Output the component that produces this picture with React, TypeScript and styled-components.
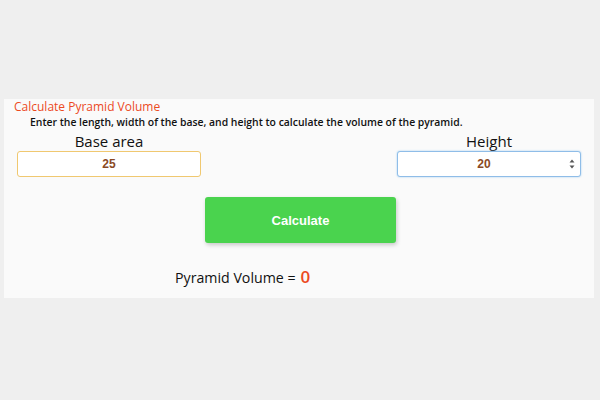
import React, { useState } from "react"
import styled, { createGlobalStyle } from "styled-components"

const GlobalStyle = createGlobalStyle`
  html, body {
    margin: 0;
    padding: 0;
    background: #efefef;
  }
  body {
    height: 400px;
    overflow: hidden;
    font-family: "Comic Sans MS", "Open Sans", sans-serif;
  }
`

const Page = styled.div`
  padding: 99px 6px 0 4px;
`

const Card = styled.section`
  background: #fafafa;
  height: 199px;
  box-sizing: border-box;
  padding: 1px 13px 0 13px;
  display: flex;
  flex-direction: column;
`

const Title = styled.h3`
  margin: 0 0 0 -3px;
  font-size: 12px;
  line-height: 14px;
  font-weight: 400;
  color: #ec4a1f;
`

const Description = styled.p`
  margin: 1px 0 0 13px;
  font-size: 10.4px;
  line-height: 14px;
  font-weight: 600;
  color: #111;
`

const FieldsRow = styled.div`
  display: flex;
  justify-content: space-between;
  margin-top: 3px;
`

const Field = styled.label`
  display: flex;
  flex-direction: column;
  align-items: center;
  width: 184px;
`

const FieldLabel = styled.span`
  font-size: 15px;
  line-height: 18px;
  color: #111;
  margin-bottom: 1px;
`

const InputBox = styled.div`
  position: relative;
  width: 100%;
`

const NumberInput = styled.input<{ $focused?: boolean }>`
  width: 100%;
  height: 26px;
  box-sizing: border-box;
  border: 1px solid ${({ $focused }) => ($focused ? "#8fbde8" : "#f0c870")};
  box-shadow: ${({ $focused }) => ($focused ? "0 0 2px #9ccaf0" : "none")};
  border-radius: 3px;
  background: #fff;
  text-align: center;
  font-family: "Liberation Sans", Arial, sans-serif;
  font-weight: 700;
  font-size: 12px;
  color: #8a4a24;
  caret-color: #8a4a24;
  outline: none;
  padding: 0 ${({ $focused }) => ($focused ? "14px" : "4px")} 0 4px;
  -moz-appearance: textfield;

  &::-webkit-inner-spin-button,
  &::-webkit-outer-spin-button {
    -webkit-appearance: none;
    margin: 0;
  }
`

const Spinner = styled.svg`
  position: absolute;
  right: 6px;
  top: 8px;
  width: 6px;
  height: 10px;
  pointer-events: none;
`

const ButtonRow = styled.div`
  display: flex;
  justify-content: center;
  margin-top: 20px;
`

const CalcButton = styled.button`
  width: 191px;
  height: 46px;
  margin-left: 3px;
  border: none;
  border-radius: 3px;
  background: #4ad34e;
  color: #fff;
  font-family: "Liberation Sans", Arial, sans-serif;
  font-weight: 700;
  font-size: 13px;
  box-shadow: 1px 2px 4px rgba(0, 0, 0, 0.2);
  cursor: pointer;
`

const Result = styled.div`
  margin: 24px 0 0 158px;
  font-size: 14.2px;
  line-height: 20px;
  color: #111;
  display: flex;
  align-items: baseline;
  gap: 5px;
`

const ResultValue = styled.span`
  font-size: 17px;
  font-weight: 600;
  color: #ec4a1f;
`

export default function App() {
  const [base, setBase] = useState("25")
  const [height, setHeight] = useState("20")
  const [volume, setVolume] = useState(0)

  return (
    <>
      <GlobalStyle />
      <Page>
        <Card>
          <Title>Calculate Pyramid Volume</Title>
          <Description>
            Enter the length, width of the base, and height to calculate the volume of the pyramid.
          </Description>
          <FieldsRow>
            <Field>
              <FieldLabel>Base area</FieldLabel>
              <InputBox>
                <NumberInput type="text" value={base} onChange={e => setBase(e.target.value)} />
              </InputBox>
            </Field>
            <Field>
              <FieldLabel>Height</FieldLabel>
              <InputBox>
                <NumberInput
                  type="number"
                  $focused
                  autoFocus
                  value={height}
                  onChange={e => setHeight(e.target.value)}
                />
                <Spinner viewBox="0 0 6 10">
                  <path d="M3 0.5 L5.5 3.5 H0.5 Z" fill="#555" />
                  <path d="M3 9.5 L5.5 6.5 H0.5 Z" fill="#555" />
                </Spinner>
              </InputBox>
            </Field>
          </FieldsRow>
          <ButtonRow>
            <CalcButton onClick={() => setVolume((Number(base) * Number(height)) / 3)}>
              Calculate
            </CalcButton>
          </ButtonRow>
          <Result>
            Pyramid Volume =<ResultValue>{volume}</ResultValue>
          </Result>
        </Card>
      </Page>
    </>
  )
}
